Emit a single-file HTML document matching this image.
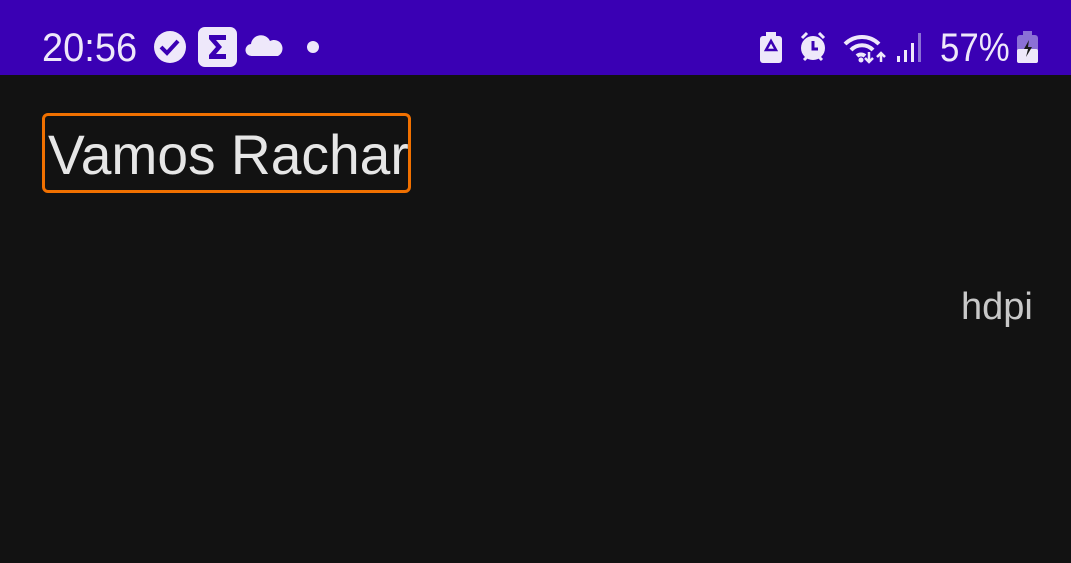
<!DOCTYPE html>
<html><head><meta charset="utf-8"><style>
html,body{margin:0;padding:0;width:1071px;height:563px;overflow:hidden;background:#121212;font-family:"Liberation Sans",sans-serif}
.sb{position:absolute;left:0;top:0;width:1071px;height:75px;background:#3a00b4;color:#eee8fa}
.t{position:absolute;font-size:40px;line-height:40px;top:28px;transform-origin:left;white-space:nowrap}
.title{position:absolute;left:42px;top:113px;width:363px;height:74px;border:3px solid #f07000;border-radius:6px}
.title span{position:absolute;left:3px;top:11px;font-size:56px;line-height:56px;color:#e6e6e6;white-space:nowrap;transform:scaleX(0.985);transform-origin:left}
.hdpi{position:absolute;left:961px;top:286px;font-size:38px;color:#c8c8c8}
</style></head><body>
<div class="sb">
<div class="t" style="left:42px;transform:scaleX(0.95)">20:56</div>
<svg width="1071" height="75" style="position:absolute;left:0;top:0">
<g fill="#eee8fa">
<circle cx="170" cy="47" r="16"/>
<path d="M161 47 l6 6 l11 -12" stroke="#3a00b4" stroke-width="4" fill="none"/>
<rect x="198" y="27" width="39" height="40" rx="7"/>
<path d="M209 35 h17 v5 h-10 l6 7 l-6 7 h10 v5 h-17 v-4 l7 -8 l-7 -8z" fill="#3a00b4"/>
<path d="M252 56 a6 6 0 0 1 -1 -12 a10 10 0 0 1 19 -3 a7 7 0 0 1 8 15 z"/>
<circle cx="313" cy="47" r="6"/>
<rect x="760" y="36" width="22" height="27" rx="3"/><rect x="766" y="32" width="10" height="5"/>
<path d="M771 41 l-5 9 h10 z" fill="none" stroke="#3a00b4" stroke-width="2.5"/>
<circle cx="813" cy="48" r="12"/><path d="M802 38 l5 -5 M824 38 l-5 -5 M804 60 l3 -3 M822 60 l-3 -3" stroke="#eee8fa" stroke-width="3"/>
<path d="M813 41 v8 h5" stroke="#3a00b4" stroke-width="3" fill="none"/>
<path d="M845 44 a24 24 0 0 1 34 0 M851 50 a15 15 0 0 1 22 0 M857 56 a6 6 0 0 1 8 0" stroke="#eee8fa" stroke-width="4" fill="none"/>
<circle cx="861" cy="60" r="2.5"/>
<path d="M869 52 v10 M865 58 l4 4 l4 -4 M881 62 v-9 M877 57 l4 -4 l4 4" stroke="#eee8fa" stroke-width="2.5" fill="none"/>
<rect x="897" y="56" width="3" height="6"/><rect x="904" y="50" width="3" height="12"/><rect x="911" y="43" width="3" height="19"/>
<rect x="918" y="33" width="3" height="29" fill="#8b70d6"/>
<rect x="1017" y="35" width="21" height="28" rx="3" fill="#8b70d6"/><rect x="1023" y="31" width="9" height="5" fill="#8b70d6"/>
<rect x="1017" y="49" width="21" height="14" rx="2"/>
<path d="M1029 40 l-5 9 h4 l-2 8 l6 -10 h-4z" fill="#1a1a1a"/>
</g></svg>
<div class="t" style="left:940px;transform:scaleX(0.87)">57%</div>
</div>
<div class="title"><span>Vamos Rachar</span></div>
<div class="hdpi">hdpi</div>
</body></html>
